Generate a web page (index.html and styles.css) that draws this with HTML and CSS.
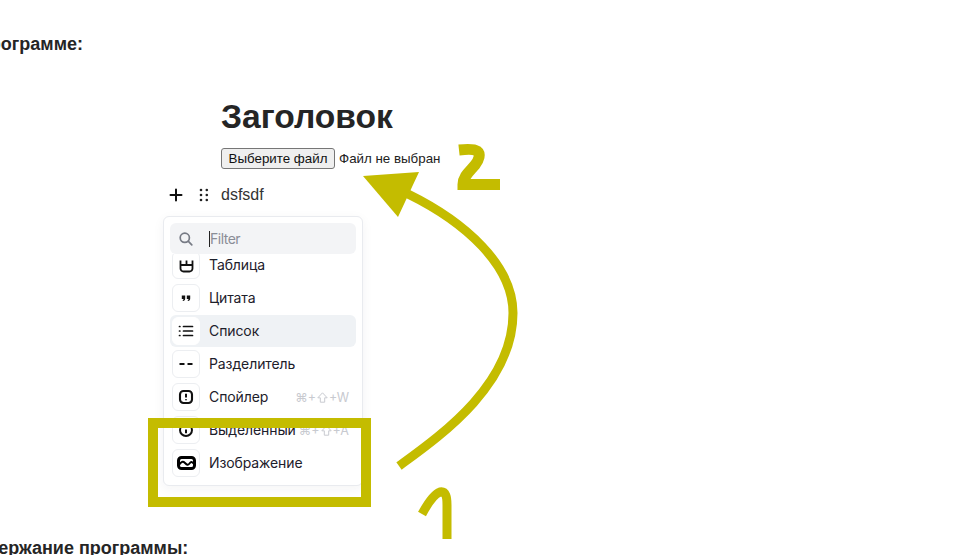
FILE: index.html
```html
<!DOCTYPE html>
<html lang="ru">
<head>
<meta charset="utf-8">
<title>Редактор</title>
<link rel="stylesheet" href="styles.css">
</head>
<body>
<div class="page">
  <h3 class="label label-top">О программе:</h3>
  <div class="editor">
    <h1 class="title">Заголовок</h1>
    <div class="file-row">
      <button class="file-btn" type="button">Выберите файл</button>
      <span class="file-name">Файл не выбран</span>
    </div>
    <div class="block-row">
      <svg class="tool-plus" width="14" height="14" viewBox="0 0 14 14"><path d="M7 1.500v11M1.500 7h11" stroke="#111" stroke-width="2" stroke-linecap="round"/></svg>
      <svg class="tool-drag" width="10" height="14" viewBox="0 0 10 14"><g fill="#222"><circle cx="2" cy="2" r="1.300"/><circle cx="7.800" cy="2" r="1.300"/><circle cx="2" cy="7" r="1.300"/><circle cx="7.800" cy="7" r="1.300"/><circle cx="2" cy="12" r="1.300"/><circle cx="7.800" cy="12" r="1.300"/></g></svg>
      <span class="block-text">dsfsdf</span>
    </div>
    <div class="menu">
      <div class="search">
        <svg class="search-icon" width="16" height="16" viewBox="0 0 16 16"><circle cx="6.800" cy="6.800" r="4.600" fill="none" stroke="#777b85" stroke-width="1.700"/><path d="M10.400 10.400l3.400 3.400" stroke="#777b85" stroke-width="1.700" stroke-linecap="round"/></svg>
        <span class="caret"></span><span class="filter">Filter</span>
      </div>
      <div class="list">
        <div class="item">
          <span class="ico"><svg width="18" height="18" viewBox="0 0 18 18" fill="none" stroke="#111" stroke-width="1.800"><path d="M3.500 4.500V12.500a3 3 0 003 3h6a3 3 0 003-3V4.500M3.500 9h12M9.500 4.500V9"/></svg></span>
          <span class="name">Таблица</span>
        </div>
        <div class="item">
          <span class="ico"><svg width="18" height="18" viewBox="0 0 18 18" fill="#111"><path d="M4.800 6.500h3.400v3.100c0 1.400-.8 2.200-2.200 2.400l-.4-1c.7-.2 1-.5 1-1.100H4.800zM9.800 6.500h3.400v3.100c0 1.400-.8 2.200-2.200 2.400l-.4-1c.7-.2 1-.5 1-1.100H9.800z"/></svg></span>
          <span class="name">Цитата</span>
        </div>
        <div class="item item-active">
          <span class="ico"><svg width="18" height="18" viewBox="0 0 18 18" stroke="#111" stroke-width="1.700" stroke-linecap="round"><path d="M6.500 4.500h9M6.500 9h9M6.500 13.500h9M2.500 4.500h.4M2.500 9h.4M2.500 13.500h.4"/></svg></span>
          <span class="name">Список</span>
        </div>
        <div class="item">
          <span class="ico"><svg width="18" height="18" viewBox="0 0 18 18" stroke="#111" stroke-width="2"><path d="M2.500 9h5M10.500 9h5"/></svg></span>
          <span class="name">Разделитель</span>
        </div>
        <div class="item">
          <span class="ico"><svg width="18" height="18" viewBox="0 0 18 18" fill="none" stroke="#111" stroke-width="2.100"><rect x="3" y="3" width="12" height="12" rx="3.500"/><path d="M9 5.800v3.700M9 11.300v1" stroke-width="2"/></svg></span>
          <span class="name">Спойлер</span>
          <span class="keys">⌘+<svg class="shift" width="11" height="11" viewBox="0 0 11 11" fill="none" stroke="#c8cad0"><path d="M5.500 .8L10.200 5.800H7.700V10.200H3.300V5.800H.8Z"/></svg>+W</span>
        </div>
        <div class="item">
          <span class="ico"><svg width="18" height="18" viewBox="0 0 18 18" fill="none" stroke="#111" stroke-width="2"><circle cx="9" cy="9" r="6"/><path d="M9 5.800v1M9 8.500v3.700"/></svg></span>
          <span class="name">Выделенный</span>
          <span class="keys">⌘+<svg class="shift" width="11" height="11" viewBox="0 0 11 11" fill="none" stroke="#c8cad0"><path d="M5.500 .8L10.200 5.800H7.700V10.200H3.300V5.800H.8Z"/></svg>+A</span>
        </div>
        <div class="item">
          <span class="ico"><svg width="20" height="18" viewBox="0 0 20 18" fill="none" stroke="#000" stroke-width="3"><rect x="2.500" y="3.500" width="16" height="11" rx="3"/><path d="M3 11C5 7.500 7 7 9 9S12 11.500 13.500 9.500S16 7.500 18 10" stroke-width="2"/></svg></span>
          <span class="name">Изображение</span>
        </div>
      </div>
    </div>
  </div>
  <h3 class="label label-bottom">Содержание программы:</h3>

  <svg class="notes" width="968" height="555" viewBox="0 0 968 555" fill="none" stroke="#c4bc00">
    <rect x="153" y="423" width="213" height="79" stroke-width="10"/>
    <path d="M399 466C440 436 513 385 513 313C513 265 465 222 408 194" stroke-width="9"/>
    <path d="M363 176L419 172L398 217Z" fill="#c4bc00" stroke="none"/>
    <path d="M459 150C468 149 474 149 477 151C481 154 479 160 475 165C470 171 463 176 463 184.500H500" stroke-width="11"/>
    <path d="M422 514C428 503 434 494 440 492C446 491 447 497 447 505V539" stroke-width="9"/>
  </svg>
</div>
</body>
</html>
```
FILE: styles.css
```css
html, body {
  margin: 0;
  padding: 0;
  background: #fff;
}
.page {
  position: relative;
  width: 968px;
  height: 555px;
  overflow: hidden;
  font-family: "Liberation Sans", Arial, sans-serif;
  color: #252525;
}
.label {
  margin: 0;
  font-size: 18px;
  line-height: 18px;
  font-weight: 700;
  white-space: nowrap;
}
.label-top {
  padding-top: 35px;
  margin-left: -40px;
}
.label-bottom {
  margin-top: 53px;
  margin-left: -37px;
}
.editor {
  margin-top: 45px;
}
.title {
  margin: 0 0 0 221px;
  font-size: 33.6px;
  line-height: 37px;
  font-weight: 700;
}
.file-row {
  display: flex;
  align-items: center;
  margin: 13px 0 0 221px;
  gap: 4px;
  font-size: 13.33px;
}
.file-btn {
  box-sizing: border-box;
  width: 114px;
  height: 21px;
  padding: 0;
  background: #efefef;
  border: 1px solid #767676;
  border-radius: 3px;
  font: inherit;
  color: #111;
  white-space: nowrap;
}
.file-name {
  color: #222;
}
.block-row {
  display: flex;
  align-items: center;
  height: 24px;
  margin: 14px 0 0 169px;
}
.tool-plus {
  margin-right: 16px;
}
.tool-drag {
  margin-right: 12px;
}
.block-text {
  font-size: 16px;
  color: #333;
}
.menu {
  box-sizing: border-box;
  width: 200px;
  height: 270px;
  margin: 9px 0 0 163px;
  padding: 6px;
  background: #fff;
  border: 1px solid #e9ebef;
  border-radius: 6px;
  box-shadow: 0 3px 12px rgba(30, 40, 60, .05);
  font-family: "Inter", sans-serif;
  font-size: 14px;
  color: #1d202b;
}
.search {
  display: flex;
  align-items: center;
  height: 31px;
  padding-left: 8px;
  background: #f3f4f6;
  border-radius: 6px;
}
.search-icon {
  margin-right: 15px;
}
.caret {
  width: 1px;
  height: 16px;
  background: #222;
}
.filter {
  color: #8a8d96;
  font-size: 14px;
  letter-spacing: -.5px;
}
.list {
  height: 226px;
  overflow: hidden;
}
.item {
  display: flex;
  align-items: center;
  height: 32px;
  margin-bottom: 1px;
  padding: 0 2px;
  border-radius: 6px;
}
.item:first-child {
  margin-top: -5px;
}
.item-active {
  background: #eff2f5;
}
.ico {
  display: flex;
  align-items: center;
  justify-content: center;
  box-sizing: border-box;
  flex: none;
  width: 28px;
  height: 28px;
  margin-right: 9px;
  background: #fff;
  border: 1px solid #eceef1;
  border-radius: 6px;
}
.item-active .ico {
  border-color: #fff;
}
.name {
  padding-bottom: 2px;
  letter-spacing: -.1px;
  white-space: nowrap;
}
.keys {
  display: flex;
  align-items: center;
  gap: 1px;
  margin-left: auto;
  padding-right: 5px;
  font-family: "Inter", "DejaVu Sans", sans-serif;
  font-size: 12.5px;
  color: #c8cad0;
  white-space: nowrap;
}
.notes {
  position: absolute;
  left: 0;
  top: 0;
}
```
